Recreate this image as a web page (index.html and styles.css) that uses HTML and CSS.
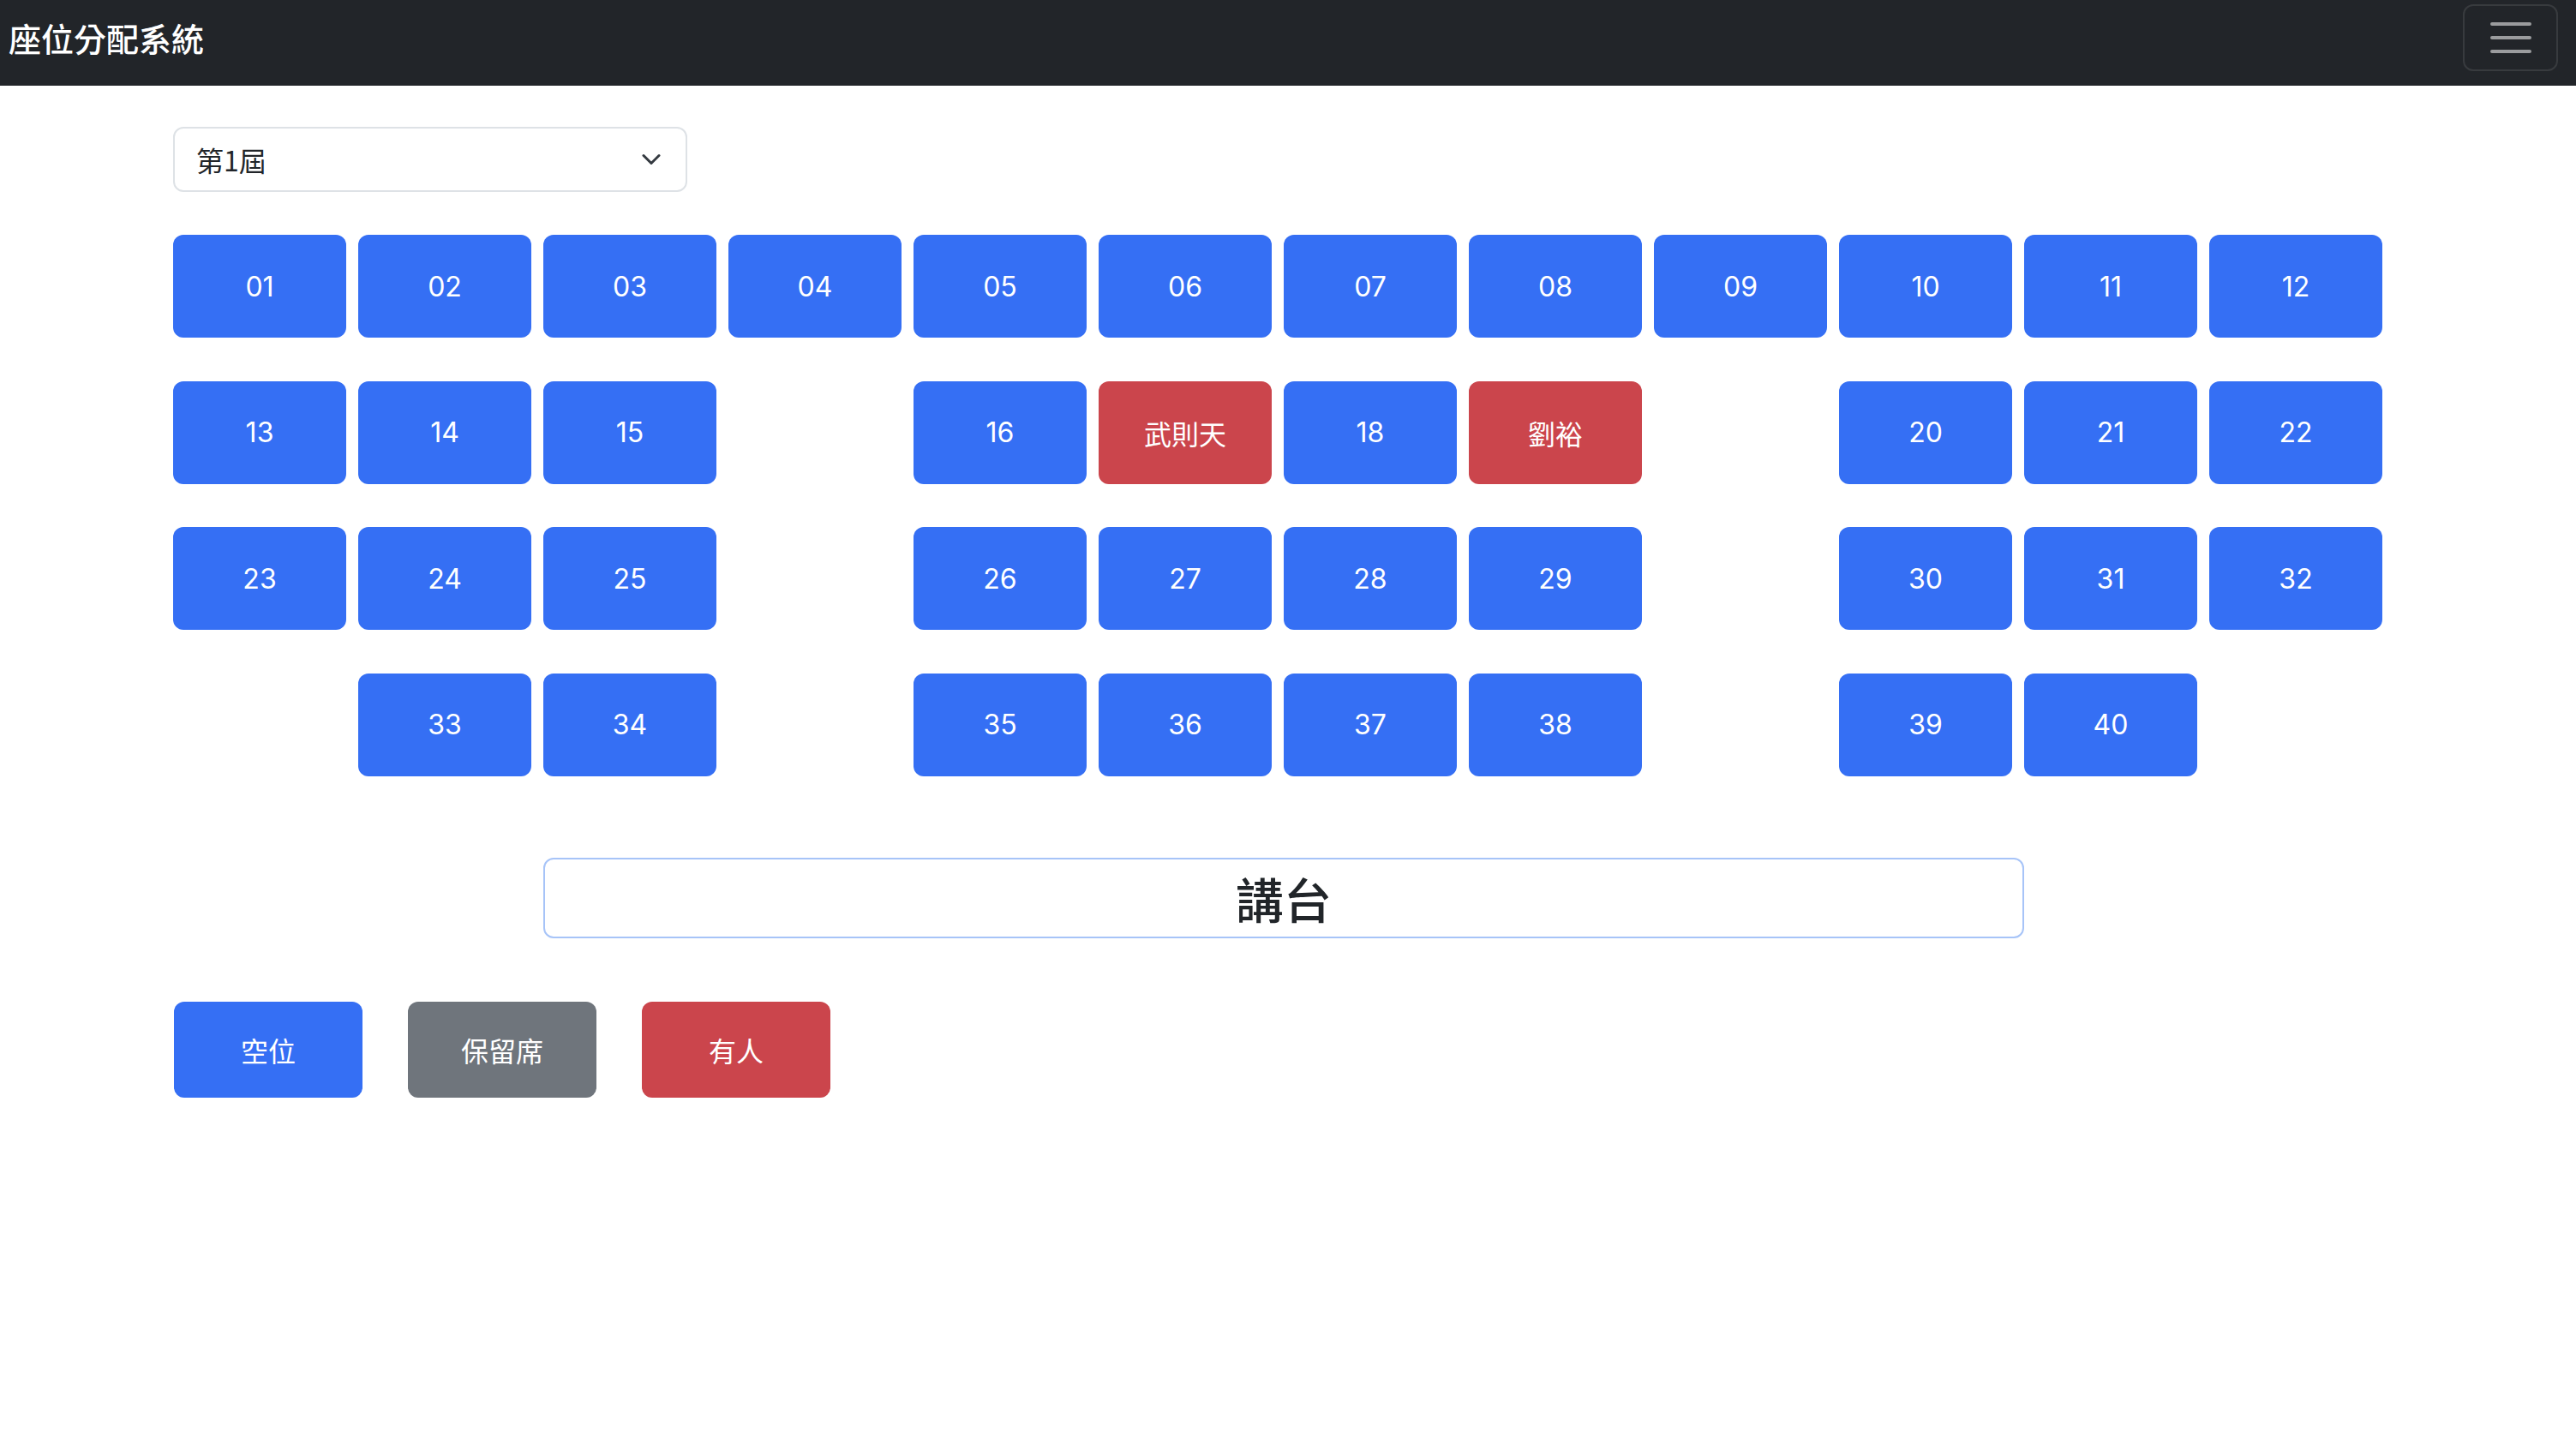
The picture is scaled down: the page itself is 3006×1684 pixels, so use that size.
FILE: index.html
```html
<!DOCTYPE html>
<html lang="zh-Hant">
<head>
<meta charset="utf-8">
<title>座位分配系統</title>
<link rel="stylesheet" href="styles.css">
</head>
<body>
<nav class="navbar">
  <span class="brand">座位分配系統</span>
  <button class="toggler" type="button" aria-label="Toggle navigation">
    <svg class="toggler-icon" viewBox="0 0 30 30" width="60" height="60"><path d="M4 7h22M4 15h22M4 23h22" stroke="rgba(255,255,255,0.55)" stroke-width="2" stroke-linecap="round" fill="none"/></svg>
  </button>
</nav>
<main class="page">
  <div class="select">
    <span>第1屆</span>
    <svg class="chevron" viewBox="0 0 16 16" width="24" height="24"><path d="m2 5 6 6 6-6" fill="none" stroke="#343a40" stroke-width="2" stroke-linecap="round" stroke-linejoin="round"/></svg>
  </div>

  <div class="seats">
    <div class="seat">01</div><div class="seat">02</div><div class="seat">03</div><div class="seat">04</div>
    <div class="seat">05</div><div class="seat">06</div><div class="seat">07</div><div class="seat">08</div>
    <div class="seat">09</div><div class="seat">10</div><div class="seat">11</div><div class="seat">12</div>

    <div class="seat">13</div><div class="seat">14</div><div class="seat">15</div><div class="aisle"></div>
    <div class="seat">16</div><div class="seat taken">武則天</div><div class="seat">18</div><div class="seat taken">劉裕</div>
    <div class="aisle"></div><div class="seat">20</div><div class="seat">21</div><div class="seat">22</div>

    <div class="seat">23</div><div class="seat">24</div><div class="seat">25</div><div class="aisle"></div>
    <div class="seat">26</div><div class="seat">27</div><div class="seat">28</div><div class="seat">29</div>
    <div class="aisle"></div><div class="seat">30</div><div class="seat">31</div><div class="seat">32</div>

    <div class="aisle"></div><div class="seat">33</div><div class="seat">34</div><div class="aisle"></div>
    <div class="seat">35</div><div class="seat">36</div><div class="seat">37</div><div class="seat">38</div>
    <div class="aisle"></div><div class="seat">39</div><div class="seat">40</div><div class="aisle"></div>
  </div>

  <div class="stage">講台</div>

  <div class="legend">
    <div class="key key-free">空位</div>
    <div class="key key-reserved">保留席</div>
    <div class="key key-taken">有人</div>
  </div>
</main>
</body>
</html>
```

FILE: styles.css
```css
* { box-sizing: border-box; }

html, body {
  margin: 0;
  padding: 0;
  background: #ffffff;
}

body {
  font-family: "Inter", "Noto Sans CJK TC", "Noto Sans", sans-serif;
  color: #212529;
}

.navbar {
  height: 100px;
  background: #222529;
  display: flex;
  align-items: center;
  justify-content: space-between;
  padding: 4px 21px 16px 10px;
}

.brand {
  color: #ffffff;
  font-family: "Noto Sans CJK TC", sans-serif;
  font-size: 38px;
  line-height: 60px;
  font-weight: 500;
}

.toggler {
  width: 111px;
  height: 78px;
  padding: 7px 23px;
  border: 2px solid rgba(255, 255, 255, 0.1);
  border-radius: 12px;
  background: transparent;
  display: flex;
  align-items: center;
  justify-content: center;
}

.toggler-icon { display: block; }

.page {
  padding: 48px 0 0 202px;
}

.select {
  width: 600px;
  height: 76px;
  border: 2px solid #dee2e6;
  border-radius: 12px;
  display: flex;
  align-items: center;
  justify-content: space-between;
  padding: 0 28px 0 25px;
  font-family: "Noto Sans CJK TC", sans-serif;
  font-size: 32px;
  color: #212529;
}

.chevron { display: block; }

.seats {
  margin-top: 50px;
  display: grid;
  grid-template-columns: repeat(12, 202px);
  grid-auto-rows: 120px;
  column-gap: 14px;
  row-gap: 50.67px;
}

.seat {
  background: #356ff4;
  color: #ffffff;
  border-radius: 12px;
  display: flex;
  align-items: center;
  justify-content: center;
  font-size: 32px;
  font-weight: 400;
}

.seat.taken { background: #cb454c; }

.stage {
  margin-top: 95px;
  margin-left: 432px;
  width: 1728px;
  height: 94px;
  border: 2px solid #a7c4f8;
  border-radius: 12px;
  display: flex;
  align-items: center;
  justify-content: center;
  font-family: "Noto Sans CJK TC", sans-serif;
  font-size: 56px;
  font-weight: 500;
  color: #212529;
}

.legend {
  margin-top: 74px;
  margin-left: 1px;
  display: flex;
  gap: 53px;
}

.key {
  width: 220px;
  height: 112px;
  border-radius: 12px;
  display: flex;
  align-items: center;
  justify-content: center;
  color: #ffffff;
  font-family: "Noto Sans CJK TC", sans-serif;
  font-size: 32px;
}

.key-free { background: #356ff4; }
.key-reserved { background: #6f757c; }
.key-taken { background: #cb454c; }
```
